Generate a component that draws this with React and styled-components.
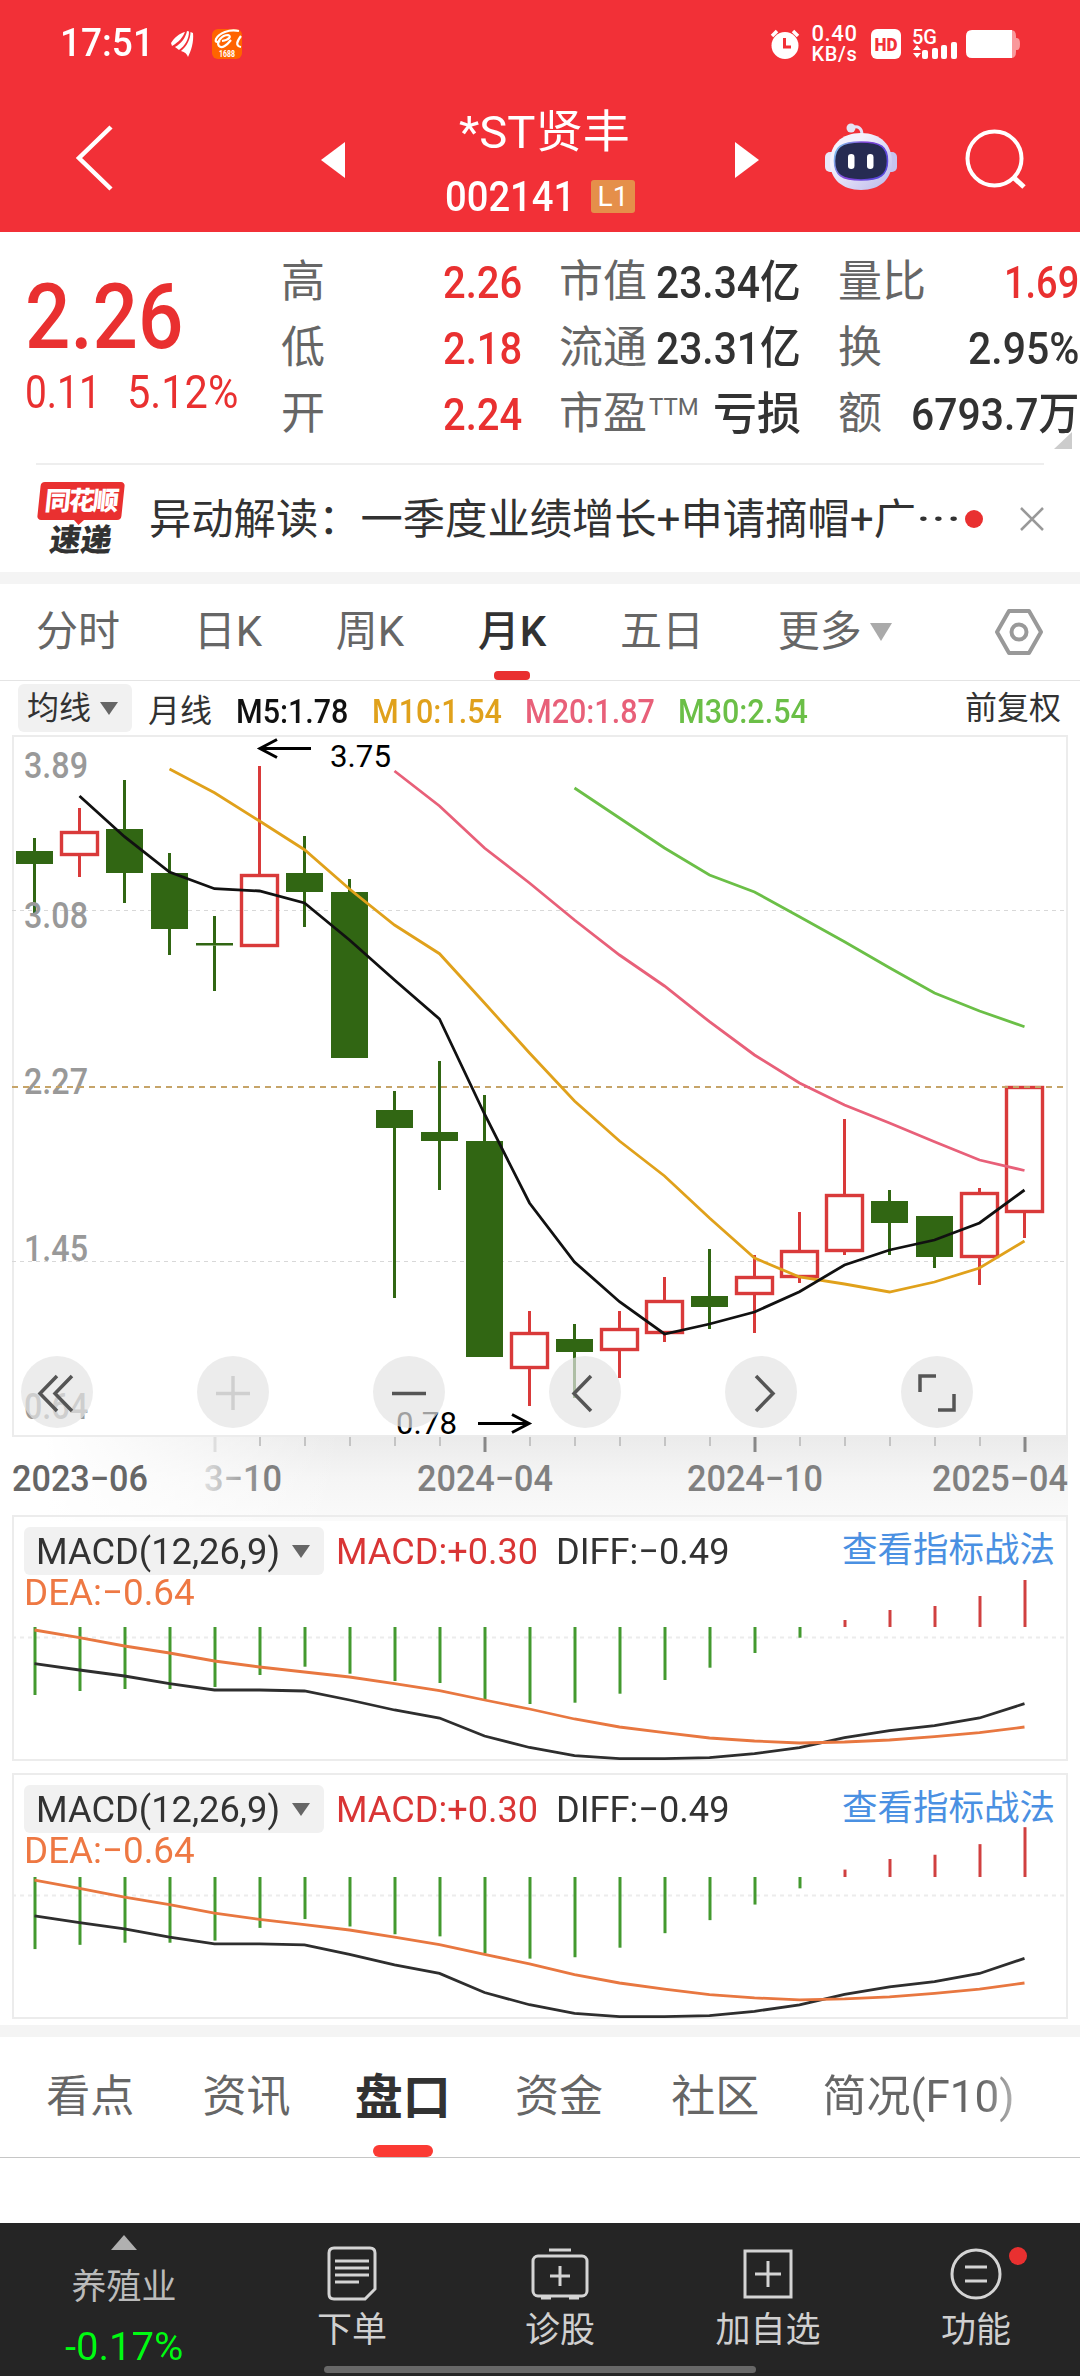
import React, { useLayoutEffect, useRef, useState } from 'react'
import styled, { createGlobalStyle } from 'styled-components'

const Colors = {
    header: '#f23037',
    red: '#e93030',
    text: '#323232',
    gray: '#666',
    band: '#f4f4f4',
    frame: '#ececec',
    candleRed: '#d93a3a',
    candleGreen: '#316613',
    black: '#111',
    m10: '#e0a11b',
    m20: '#e86079',
    m30: '#6bbf47',
    dea: '#ee7843',
    link: '#4a90e2',
}

const GlobalStyle = createGlobalStyle`
    * { box-sizing: border-box; }
    body {
        margin: 0;
        background: #fff;
        color: ${Colors.text};
        font-family: Roboto, "Noto Sans CJK SC", sans-serif;
        line-height: 1;
    }
    svg { display: block; overflow: visible; }
`

const Screen = styled.div`
    width: 1080px;
    height: 2376px;
    overflow: hidden;
    display: flex;
    flex-direction: column;
`

const FitBox = styled.span`
    display: inline-block;
    width: ${p => p.$w}px;
    white-space: nowrap;
    flex: none;
`

const FitText = styled.span`
    display: inline-block;
    transform-origin: left center;
`

function Fit({ w, children }) {
    const ref = useRef(null)
    const [scale, setScale] = useState(1)
    useLayoutEffect(() => {
        setScale(w / ref.current.offsetWidth)
    }, [w, children])
    return (
        <FitBox $w={w}>
            <FitText ref={ref} style={{ transform: `scaleX(${scale})` }}>{children}</FitText>
        </FitBox>
    )
}

/* ---------- header ---------- */

const Header = styled.header`
    height: 232px;
    flex: none;
    background: ${Colors.header};
    color: #fff;
`

const StatusBar = styled.div`
    height: 88px;
    padding: 0 60px 0 60px;
    display: flex;
    align-items: center;
`

const Clock = styled.div`
    font-size: 39px;
    font-weight: 500;
    line-height: 40px;
    margin: -3px 17px 0 0;
`

const StatusIcons = styled.div`
    margin-left: auto;
    display: flex;
    align-items: center;
`

const Speed = styled.div`
    width: 51px;
    margin: -2px 11px 0 9px;
    font-size: 20px;
    font-weight: 500;
    line-height: 18px;
    text-align: center;
    letter-spacing: 0.6px;
    & b {
        display: block;
        font-size: 22px;
        line-height: 22px;
        font-weight: 500;
    }
`

const TitleBar = styled.div`
    height: 144px;
    display: flex;
    align-items: flex-start;
`

const BackIcon = styled.svg`
    margin: 36px 0 0 76px;
`

const Arrow = styled.svg`
    margin-top: 53px;
    flex: none;
`

const Title = styled.div`
    width: 390px;
    text-align: center;
    & h1 {
        margin: 14px 0 0;
        font-size: 45px;
        line-height: 62px;
        font-weight: 400;
    }
    & p {
        margin: 0;
        display: flex;
        justify-content: center;
        align-items: center;
        font-size: 42px;
        font-weight: 500;
        line-height: 66px;
        height: 66px;
    }
`

const Level = styled.span`
    width: 44px;
    height: 33px;
    margin: 0 0 2px 16px;
    border-radius: 3px;
    background: #e58f4a;
    font-size: 28px;
    font-weight: 400;
    line-height: 33px;
`

/* ---------- quote ---------- */

const Quote = styled.section`
    height: 231px;
    flex: none;
    display: flex;
    position: relative;
    padding-top: 17px;
`

const Price = styled.div`
    width: 281px;
    padding-left: 25px;
    color: ${Colors.red};
    & strong {
        display: block;
        margin-top: 23px;
        font-size: 90px;
        line-height: 92px;
        font-weight: 500;
    }
    & p {
        margin: 5px 0 0;
        display: flex;
        gap: 26px;
        font-size: 46px;
        line-height: 46px;
    }
`

const Facts = styled.div`
    display: grid;
    grid-template-columns: 241px 242px 241px;
    grid-auto-rows: 66px;
    column-gap: 37px;
`

const Fact = styled.div`
    display: flex;
    justify-content: space-between;
    align-items: center;
    font-size: 44px;
    color: ${Colors.gray};
    & sup {
        align-self: flex-start;
        margin: 12px auto 0 2px;
        font-size: 24px;
        line-height: 28px;
    }
    & b {
        font-size: 45px;
        font-weight: 500;
        color: ${p => (p.$up ? Colors.red : Colors.text)};
    }
`

const Corner = styled.svg`
    position: absolute;
    right: 8px;
    bottom: 14px;
`

const News = styled.section`
    height: 109px;
    flex: none;
    margin: 0 36px;
    border-top: 2px solid #eee;
    display: flex;
    align-items: center;
    & p {
        margin: 4px 0 0 23px;
        font-size: 42.3px;
    }
`

const Badge = styled.div`
    width: 90px;
    height: 73px;
    display: flex;
    flex-direction: column;
    align-items: center;
    font-weight: 900;
`

const BadgeTop = styled.div`
    position: relative;
    width: 84px;
    height: 38px;
    border-radius: 4px;
    background: ${Colors.red};
    color: #fff;
    font-size: 26px;
    line-height: 38px;
    letter-spacing: -2px;
    text-align: center;
    transform: skewX(-6deg);
    &::after {
        content: '';
        position: absolute;
        left: 36px;
        top: 37px;
        border: 6px solid transparent;
        border-top-color: ${Colors.red};
    }
`

const BadgeBottom = styled.div`
    margin-top: 6px;
    font-size: 31px;
    line-height: 30px;
    transform: skewX(-8deg);
`

const Dot = styled.i`
    width: 18px;
    height: 18px;
    border-radius: 50%;
    background: ${Colors.red};
`

const Band = styled.div`
    height: 12px;
    flex: none;
    background: ${Colors.band};
`

/* ---------- period tabs ---------- */

const Tabs = styled.nav`
    height: 97px;
    flex: none;
    padding-left: 36px;
    display: flex;
    gap: 73.7px;
    border-bottom: 1px solid #e4e4e4;
    font-size: 42px;
    line-height: 98px;
    color: ${Colors.gray};
`

const Tab = styled.span`
    position: relative;
    display: flex;
    align-items: center;
    color: ${p => (p.$active ? Colors.text : 'inherit')};
    font-weight: ${p => (p.$active ? 500 : 400)};
    &::after {
        content: '';
        display: ${p => (p.$active ? 'block' : 'none')};
        position: absolute;
        left: 50%;
        bottom: 0;
        width: 36px;
        height: 9px;
        margin-left: -18px;
        border-radius: 4px;
        background: ${Colors.red};
    }
`

const Down = styled.i`
    width: 0;
    border: solid transparent;
    border-width: ${p => p.$h}px ${p => p.$w / 2}px 0;
    border-top-color: ${p => p.$color};
`

const Settings = styled.svg`
    margin: 24px 0 0 29px;
`

const MaBar = styled.div`
    height: 54px;
    flex: none;
    padding: 0 19px 0 18px;
    display: flex;
    align-items: center;
    font-size: 32px;
    font-weight: 500;
    & > i {
        margin-left: auto;
        font-style: normal;
        font-weight: 400;
    }
`

const Chip = styled.span`
    width: ${p => p.$w}px;
    height: 48px;
    padding: 0 14px 0 9px;
    display: flex;
    align-items: center;
    justify-content: space-between;
    background: #f1f1f1;
    border-radius: 6px;
    font-weight: 400;
`

const MaLabel = styled.span`
    margin-left: ${p => p.$ml}px;
    padding-top: 6px;
    color: ${p => p.$color || Colors.text};
    font-size: ${p => p.$size || 34}px;
    font-weight: ${p => (p.$size ? 400 : 500)};
`

/* ---------- charts ---------- */

const ChartWrap = styled.section`
    position: relative;
    height: 780px;
    flex: none;
`

const Tools = styled.div`
    position: absolute;
    left: 21px;
    top: 621px;
    display: flex;
    gap: 104px;
`

const Tool = styled.button`
    width: 72px;
    height: 72px;
    padding: 0;
    border: 0;
    border-radius: 50%;
    background: rgba(228, 228, 228, 0.7);
`

const MacdPanel = styled.section`
    position: relative;
    height: 246px;
    flex: none;
    margin: 0 12px ${p => p.$mb}px;
    border: 2px solid ${Colors.frame};
    display: grid;
    & > * {
        grid-area: 1 / 1;
    }
`

const MacdInfo = styled.div`
    padding: 10px 11px 0 10px;
    font-size: 37px;
    & > div {
        display: flex;
        align-items: center;
        height: 48px;
    }
    & > p {
        margin: 0;
        line-height: 36px;
        color: ${Colors.dea};
    }
    & a {
        margin-left: auto;
        color: ${Colors.link};
        font-size: 35.5px;
    }
`

const MacdValue = styled.span`
    margin-left: ${p => p.$ml}px;
    color: ${p => p.$color};
`

/* ---------- bottom ---------- */

const InfoTabs = styled.nav`
    height: 121px;
    flex: none;
    padding-left: 12px;
    display: flex;
    border-bottom: 1px solid #c6c6c6;
    font-size: 44px;
    line-height: 121px;
    color: ${Colors.gray};
`

const InfoTab = styled.span`
    position: relative;
    width: 156.3px;
    text-align: center;
    color: ${p => (p.$active ? Colors.text : 'inherit')};
    font-size: ${p => (p.$active ? 48 : 44)}px;
    font-weight: ${p => (p.$active ? 700 : 400)};
    &::after {
        content: '';
        display: ${p => (p.$active ? 'block' : 'none')};
        position: absolute;
        left: 48px;
        bottom: 0;
        width: 60px;
        height: 12px;
        border-radius: 6px;
        background: #fb3a33;
    }
`

const LastTab = styled.span`
    padding-left: 29px;
    background: linear-gradient(90deg, #666 85%, #b5b5b5);
    background-clip: text;
    color: transparent;
`

const BottomBar = styled.footer`
    position: relative;
    margin-top: auto;
    height: 153px;
    flex: none;
    display: grid;
    grid-template-columns: 248px 208px 208px 208px 208px;
    background: #252525;
    color: #d0d0d0;
    font-size: 35px;
`

const Industry = styled.div`
    display: flex;
    flex-direction: column;
    align-items: center;
    padding-top: 12px;
    line-height: 38px;
    color: #bbb;
    & > span {
        margin-top: 18px;
    }
    & > em {
        margin-top: 21px;
        font-style: normal;
        font-size: 39px;
        color: #00fa12;
    }
`

const NavItem = styled.div`
    position: relative;
    display: flex;
    flex-direction: column;
    align-items: center;
    padding-top: 22px;
    line-height: 38px;
    & svg {
        margin-bottom: 11px;
    }
    & ${Dot} {
        position: absolute;
        left: 137px;
        top: 24px;
    }
`

const HomeBar = styled.div`
    position: absolute;
    left: 324px;
    bottom: 3px;
    width: 432px;
    height: 7px;
    border-radius: 4px;
    background: #686868;
`

/* candle: [up, high, bodyTop, bodyBottom, low] in chart pixels */
const candles = [
    [0, 838, 851, 864, 913],
    [1, 808, 831, 856, 877],
    [0, 780, 829, 873, 903],
    [0, 853, 873, 929, 955],
    [0, 916, 943, 945.5, 991],
    [1, 766, 874, 947, 947],
    [0, 836, 873, 892, 927],
    [0, 879, 892, 1058, 1058],
    [0, 1091, 1110, 1128, 1298],
    [0, 1061, 1132, 1141, 1190],
    [0, 1095, 1141, 1357, 1357],
    [1, 1311, 1332, 1369, 1406],
    [0, 1324, 1339, 1352, 1398],
    [1, 1311, 1328, 1351, 1378],
    [1, 1277, 1300, 1334, 1342],
    [0, 1249, 1296, 1307, 1329],
    [1, 1255, 1276, 1295, 1333],
    [1, 1212, 1250, 1278, 1283],
    [1, 1119, 1194, 1252, 1255],
    [0, 1190, 1201, 1223, 1255],
    [0, 1216, 1216, 1257, 1268],
    [1, 1188, 1192, 1258, 1285],
    [1, 1086, 1086, 1213, 1238],
]

const averages = [
    { from: 3, color: Colors.m10, ys: [769, 792.7, 821, 849.7, 889, 925, 953.7, 1003, 1053, 1101, 1141, 1176, 1218, 1258, 1277, 1284, 1292, 1282, 1268, 1241] },
    { from: 8, color: Colors.m20, ys: [771, 806, 848, 883, 920, 955, 986, 1021.7, 1055, 1083, 1105, 1123, 1141.7, 1160, 1170.5] },
    { from: 12, color: Colors.m30, ys: [788, 818, 848, 875, 892, 916.7, 941.7, 967.7, 993, 1011, 1026.7] },
    { from: 1, color: Colors.black, ys: [796, 836.7, 872, 888.7, 891, 903, 940, 980, 1019, 1114, 1203, 1262, 1301.7, 1334, 1324, 1312, 1291.7, 1265, 1250, 1240, 1223, 1190] },
]

/* offsets from the zero line of the MACD chart */
const bars = [68, 64, 62, 62, 60, 48, 39.7, 46.7, 54, 56, 72, 77, 75.7, 66.7, 53, 40.7, 26, 10.7, -7, -17, -21, -31, -47]
const diff = [36.7, 43, 49, 56.7, 63, 63, 64, 73, 83, 91, 109, 120.5, 128.7, 131.7, 131.7, 130.7, 126.7, 120.7, 110.7, 103.7, 98.7, 91, 76.7]
const dea = [3, 10.7, 19, 26, 34, 40, 45, 50, 56.7, 63.7, 73, 82, 92, 100, 105.7, 111, 114, 116, 115, 113, 109.7, 105.7, 100]

const xAt = i => 34.5 + i * 45
const toPoints = (ys, from = 0) => ys.map((y, i) => `${xAt(i + from)},${y}`).join(' ')

function Candle({ i, data: [up, high, top, bottom, low] }) {
    const x = xAt(i)
    const color = up ? Colors.candleRed : Colors.candleGreen
    return (
        <g stroke={color} strokeWidth="3">
            {high < top && <line x1={x} x2={x} y1={high} y2={top} />}
            {low > bottom && <line x1={x} x2={x} y1={bottom} y2={low} />}
            {up
                ? <rect x={x - 18} y={top + 1.5} width="36" height={bottom - top - 3} fill="none" strokeWidth="3.4" />
                : <rect x={x - 18.5} y={top} width="37" height={bottom - top} fill={color} stroke="none" />}
        </g>
    )
}

function KLine() {
    const labels = [['3.89', 778], ['3.08', 928], ['2.27', 1094], ['1.45', 1261], ['0.64', 1419]]
    const dates = [['2023−06', 12], ['2024−04', 417], ['2024−10', 687], ['2025−04', 932]]
    return (
        <svg width="1080" height="780" viewBox="0 735 1080 780">
            <defs>
                <linearGradient id="shade" x1="0" y1="0" x2="0" y2="1">
                    <stop offset="0" stopColor="#ebebeb" />
                    <stop offset="0.5" stopColor="#f5f5f5" />
                    <stop offset="1" stopColor="#fafafa" />
                </linearGradient>
                <linearGradient id="cover" x1="0" y1="0" x2="1" y2="0">
                    <stop offset="0.1" stopColor="#fff" />
                    <stop offset="1" stopColor="#fff" stopOpacity="0" />
                </linearGradient>
                <linearGradient id="fade" gradientUnits="userSpaceOnUse" x1="195" y1="0" x2="265" y2="0">
                    <stop offset="0" stopColor="#808080" stopOpacity="0.1" />
                    <stop offset="1" stopColor="#808080" />
                </linearGradient>
            </defs>
            <rect x="12" y="1437" width="1056" height="84" fill="url(#shade)" />
            <rect x="12" y="1437" width="330" height="84" fill="url(#cover)" />
            <rect x="13" y="736" width="1054" height="700" fill="none" stroke={Colors.frame} strokeWidth="2" />
            <g strokeWidth="1" stroke="#d8d8d8" strokeDasharray="4 4">
                <line x1="12" x2="1066" y1="910.5" y2="910.5" />
                <line x1="12" x2="1066" y1="1261.5" y2="1261.5" />
            </g>
            {candles.map((c, i) => <Candle key={i} i={i} data={c} />)}
            <g fill="#999" fontSize="36" fontWeight="500">
                {labels.map(([t, y]) => (
                    <text key={t} x="24" y={y} textLength="64" lengthAdjust="spacingAndGlyphs">{t}</text>
                ))}
            </g>
            <line x1="12" x2="1066" y1="1087" y2="1087" stroke="#c6a468" strokeWidth="2" strokeDasharray="6 5" />
            {averages.map(a => (
                <polyline key={a.color} points={toPoints(a.ys, a.from)} fill="none" stroke={a.color} strokeWidth="2.8" />
            ))}
            <g fill="none" stroke="#000" strokeWidth="3">
                <path d="M311 748.500H260M277 739.500L260 748.500L277 757.500" />
                <path d="M478 1423.500H529M512 1414.500L529 1423.500L512 1432.500" />
            </g>
            <g fill="#000" fontSize="32">
                <text x="330" y="767" textLength="61" lengthAdjust="spacingAndGlyphs">3.75</text>
                <text x="396" y="1434" textLength="61" lengthAdjust="spacingAndGlyphs">0.78</text>
            </g>
            {candles.map((c, i) => {
                if (i < 4) return null
                const major = (i - 4) % 6 === 0
                return (
                    <line
                        key={i}
                        x1={xAt(i) + 0.5}
                        x2={xAt(i) + 0.5}
                        y1="1437"
                        y2={major ? 1452 : 1446}
                        stroke={major ? (i === 4 ? '#dedede' : '#888') : '#c4c4c4'}
                        strokeWidth={major ? 3 : 2}
                    />
                )
            })}
            <g fontSize="36" fontWeight="500">
                {dates.map(([t, x], i) => (
                    <text key={t} x={x} y="1490.500" fill={i ? '#808080' : '#666'} textLength="136" lengthAdjust="spacingAndGlyphs">{t}</text>
                ))}
                <text x="204" y="1490.500" fill="url(#fade)" textLength="78" lengthAdjust="spacingAndGlyphs">3−10</text>
            </g>
        </svg>
    )
}

const toolPaths = [
    'M36 20L19 37.500L36 55M51 20L34 37.500L51 55',
    'M36 20V54M19 37.500H53',
    'M19 37.500H53',
    'M42 20L25 37.500L42 55',
    'M31 20L48 37.500L31 55',
    'M19 36V20H35M53 38V54H37',
]

function Macd({ top, zero, scale, mb }) {
    const y = v => zero + v * scale
    return (
        <MacdPanel $mb={mb}>
            <svg width="1052" height="242" viewBox={`14 ${top + 2} 1052 242`}>
                <line x1="12" x2="1066" y1={top + 122.5} y2={top + 122.5} stroke={Colors.frame} strokeWidth="2" strokeDasharray="4 4" />
                {bars.map((b, i) => (
                    <line key={i} x1={xAt(i) + 0.5} x2={xAt(i) + 0.5} y1={zero} y2={y(b)} stroke={b > 0 ? '#43992f' : '#d04040'} strokeWidth="3" />
                ))}
                <polyline points={toPoints(diff.map(y))} fill="none" stroke="#2e2e2e" strokeWidth="2.8" />
                <polyline points={toPoints(dea.map(y))} fill="none" stroke="#e87740" strokeWidth="2.8" />
            </svg>
            <MacdInfo>
                <div>
                    <Chip $w={300}>
                        <MacdValue $ml={3}><Fit w={244}>MACD(12,26,9)</Fit></MacdValue>
                        <Down $w={18} $h={13} $color={Colors.gray} />
                    </Chip>
                    <MacdValue $ml={12} $color="#d93535"><Fit w={202}>MACD:+0.30</Fit></MacdValue>
                    <MacdValue $ml={18} $color={Colors.text}><Fit w={174}>DIFF:−0.49</Fit></MacdValue>
                    <a>查看指标战法</a>
                </div>
                <p><Fit w={171}>DEA:−0.64</Fit></p>
            </MacdInfo>
        </MacdPanel>
    )
}

function StatusGlyphs() {
    return (
        <>
            <svg width="24" height="26" viewBox="0 0 24 26" fill="#fff">
                <path d="M0 12C3 7 9 2 14 1C12 6 8 11 1 15ZM4 16C10 13 15 6 16 0L18 0.500C18 8 14 15 8 19ZM10 20C16 15 19.500 8 19.500 1L22 2C23 11 20 20 17 26C16 23 14 21 10 20Z" />
            </svg>
            <svg width="30" height="30" viewBox="0 0 30 30" style={{ marginLeft: 17 }}>
                <rect width="30" height="30" rx="6" fill="#ff6400" />
                <path d="M27 2C17 0 7 4 4 10C3 13 5 14 8 12M10 12C17 11 20 7 16 6C10 6 4 13 7 17C10 20 15 16 19 11M29 7C25 12 23 17 29 18" fill="none" stroke="#fff" strokeWidth="2.200" />
                <text x="7" y="28" fill="#fff" fontSize="9" fontWeight="700" textLength="16" lengthAdjust="spacingAndGlyphs">1688</text>
            </svg>
        </>
    )
}

function Robot() {
    return (
        <svg width="74" height="68" viewBox="0 0 74 68">
            <defs>
                <linearGradient id="shell" x1="0" y1="0" x2="1" y2="1">
                    <stop offset="0.3" stopColor="#f4f2fd" />
                    <stop offset="1" stopColor="#b9b6ea" />
                </linearGradient>
                <linearGradient id="rim" x1="0" y1="0" x2="1" y2="0.4">
                    <stop offset="0" stopColor="#7fd8f4" />
                    <stop offset="0.5" stopColor="#8243d8" />
                    <stop offset="1" stopColor="#5b49dd" />
                </linearGradient>
            </defs>
            <path d="M27 5C34 2 38 5 38 12" fill="none" stroke="#e4e2f8" strokeWidth="3" />
            <circle cx="27" cy="5" r="4.500" fill="#e4e4f4" />
            <rect x="1" y="29" width="12" height="20" rx="5" fill="#e9e7f8" />
            <rect x="61" y="29" width="12" height="20" rx="5" fill="#c6c3ee" />
            <path d="M37 10C57 10 68 22 68 39C68 56 56 67 37 67C18 67 6 56 6 39C6 22 17 10 37 10Z" fill="url(#shell)" />
            <path d="M37 19C57 19 63.500 24 63.500 38C63.500 52 56 57 37 57C18 57 10.500 52 10.500 38C10.500 24 17 19 37 19Z" fill="#262b52" stroke="url(#rim)" strokeWidth="1.600" />
            <rect x="24" y="31" width="6.500" height="15" rx="3.200" fill="#fff" />
            <rect x="43" y="31" width="6.500" height="15" rx="3.200" fill="#fff" />
        </svg>
    )
}

const facts = [
    ['高', '2.26', 79, true], ['市值', '23.34亿', 145], ['量比', '1.69', 75, true],
    ['低', '2.18', 79, true], ['流通', '23.31亿', 145], ['换', '2.95%', 111],
    ['开', '2.24', 79, true], ['市盈', '亏损', 88, false, 'TTM'], ['额', '6793.7万', 168],
]

function App() {
    return (
        <Screen>
            <GlobalStyle />
            <Header>
                <StatusBar>
                    <Clock><Fit w={94}>17:51</Fit></Clock>
                    <StatusGlyphs />
                    <StatusIcons>
                        <svg width="30" height="30" viewBox="0 0 30 30">
                            <path d="M2 7L7 2M28 7L23 2" stroke="#fff" strokeWidth="3.500" />
                            <circle cx="15" cy="16.500" r="13.500" fill="#fff" />
                            <path d="M14.500 9V18H21" fill="none" stroke={Colors.header} strokeWidth="3" />
                        </svg>
                        <Speed><b>0.40</b>KB/s</Speed>
                        <svg width="30" height="30" viewBox="0 0 30 30">
                            <rect width="30" height="30" rx="6" fill="#fff" />
                            <text x="3.500" y="21.500" fill={Colors.header} fontSize="18" fontWeight="900" textLength="23" lengthAdjust="spacingAndGlyphs">HD</text>
                        </svg>
                        <svg width="45" height="32" viewBox="0 0 45 32" fill="#fff" style={{ marginLeft: 11 }}>
                            <text x="0" y="15.500" fontSize="20" fontWeight="500" textLength="25" lengthAdjust="spacingAndGlyphs">5G</text>
                            <path d="M1 22L5 17L9 22ZM1 25H9L5 30Z" />
                            <rect x="10" y="22" width="6" height="9" rx="2" />
                            <rect x="20" y="20" width="6" height="11" rx="2" />
                            <rect x="29" y="17" width="6" height="14" rx="2" />
                            <rect x="39" y="14" width="6" height="17" rx="2" />
                        </svg>
                        <svg width="54" height="28" viewBox="0 0 54 28" style={{ marginLeft: 9 }}>
                            <path d="M42 0H45Q50 0 50 6V8H51Q54 8 54 14Q54 20 51 20H50V22Q50 28 45 28H42Z" fill="#fff" opacity="0.5" />
                            <path d="M6 0H46V28H6Q0 28 0 22V6Q0 0 6 0Z" fill="#fff" />
                        </svg>
                    </StatusIcons>
                </StatusBar>
                <TitleBar>
                    <BackIcon width="38" height="68" viewBox="0 0 38 68">
                        <path d="M35 3L3 34L35 65" fill="none" stroke="#fff" strokeWidth="4.500" />
                    </BackIcon>
                    <Arrow width="24" height="38" viewBox="0 0 24 38" style={{ marginLeft: 207 }}>
                        <path d="M24 1V37L0 19Z" fill="#fff" />
                    </Arrow>
                    <Title>
                        <h1><Fit w={171}>*ST贤丰</Fit></h1>
                        <p><Fit w={130}>002141</Fit><Level>L1</Level></p>
                    </Title>
                    <Arrow width="24" height="38" viewBox="0 0 24 38">
                        <path d="M0 1V37L24 19Z" fill="#fff" />
                    </Arrow>
                    <svg width="206" height="100" viewBox="759 88 206 100">
                        <g transform="translate(824 123)"><Robot /></g>
                    </svg>
                    <svg width="62" height="62" viewBox="0 0 62 62" style={{ marginTop: 41 }}>
                        <circle cx="29.500" cy="29.500" r="27" fill="none" stroke="#fff" strokeWidth="4" />
                        <path d="M48 48L59 58" stroke="#fff" strokeWidth="5" />
                    </svg>
                </TitleBar>
            </Header>

            <Quote>
                <Price>
                    <strong><Fit w={158}>2.26</Fit></strong>
                    <p><Fit w={76}>0.11</Fit><Fit w={111}>5.12%</Fit></p>
                </Price>
                <Facts>
                    {facts.map(([label, value, w, up, sup]) => (
                        <Fact key={label} $up={up}>
                            <span>{label}</span>
                            {sup && <sup>{sup}</sup>}
                            <b><Fit w={w}>{value}</Fit></b>
                        </Fact>
                    ))}
                </Facts>
                <Corner width="18" height="17"><path d="M18 0V17H0Z" fill="#ccc" /></Corner>
            </Quote>

            <News>
                <Badge>
                    <BadgeTop>同花顺</BadgeTop>
                    <BadgeBottom>速递</BadgeBottom>
                </Badge>
                <p><Fit w={767}>异动解读：一季度业绩增长+申请摘帽+广</Fit><Fit w={45}>···</Fit></p>
                <Dot style={{ marginLeft: 4 }} />
                <svg width="24" height="24" viewBox="0 0 24 24" style={{ marginLeft: 37 }}>
                    <path d="M1 1L23 23M23 1L1 23" stroke="#999" strokeWidth="2.500" />
                </svg>
            </News>
            <Band />

            <Tabs>
                <Tab>分时</Tab>
                <Tab>日K</Tab>
                <Tab>周K</Tab>
                <Tab $active>月K</Tab>
                <Tab>五日</Tab>
                <Tab>更多<Down $w={22} $h={18} $color="#aaa" style={{ marginLeft: 8 }} /></Tab>
                <Settings width="50" height="48" viewBox="0 0 50 48" fill="none" stroke="#999" strokeWidth="4">
                    <path d="M15 3H35L47 24L35 45H15L3 24Z" strokeLinejoin="round" />
                    <circle cx="25" cy="24" r="7.500" />
                </Settings>
            </Tabs>
            <MaBar>
                <Chip $w={114}>均线<Down $w={18} $h={13} $color={Colors.gray} /></Chip>
                <MaLabel $ml={16} $size={32}>月线</MaLabel>
                <MaLabel $ml={24} $color={Colors.black}><Fit w={112}>M5:1.78</Fit></MaLabel>
                <MaLabel $ml={24} $color={Colors.m10}><Fit w={130}>M10:1.54</Fit></MaLabel>
                <MaLabel $ml={23} $color={Colors.m20}><Fit w={130}>M20:1.87</Fit></MaLabel>
                <MaLabel $ml={23} $color={Colors.m30}><Fit w={130}>M30:2.54</Fit></MaLabel>
                <i>前复权</i>
            </MaBar>

            <ChartWrap>
                <KLine />
                <Tools>
                    {toolPaths.map((d, i) => (
                        <Tool key={d}>
                            <svg width="72" height="72" viewBox="0 0 72 72">
                                <path d={d} fill="none" stroke={i === 1 ? '#cfcfcf' : '#555'} strokeWidth="3.500" />
                            </svg>
                        </Tool>
                    ))}
                </Tools>
            </ChartWrap>

            <Macd top={1515} zero={1627} scale={1} mb={12} />
            <Macd top={1773} zero={1877} scale={1.06} mb={6} />
            <Band />

            <InfoTabs>
                <InfoTab>看点</InfoTab>
                <InfoTab>资讯</InfoTab>
                <InfoTab $active>盘口</InfoTab>
                <InfoTab>资金</InfoTab>
                <InfoTab>社区</InfoTab>
                <LastTab>简况(F10)</LastTab>
            </InfoTabs>

            <BottomBar>
                <Industry>
                    <svg width="26" height="16"><path d="M0 15L13 0L26 15Z" fill="#b0b0b0" /></svg>
                    <span>养殖业</span>
                    <em><Fit w={118}>-0.17%</Fit></em>
                </Industry>
                <NavItem>
                    <svg width="50" height="56" viewBox="0 0 50 56" fill="none" stroke="#d4d4d4" strokeWidth="3">
                        <path d="M7 3H43Q48 3 48 8V44L38 54H7Q2 54 2 49V8Q2 3 7 3Z" />
                        <path d="M8 16H42M8 23H42M8 30H42M8 37H32" />
                    </svg>
                    下单
                </NavItem>
                <NavItem>
                    <svg width="58" height="56" viewBox="0 0 58 56" fill="none" stroke="#d4d4d4" strokeWidth="3">
                        <rect x="2" y="11" width="54" height="40" rx="5" />
                        <path d="M18 5H40M10 53H20M38 53H48M29 21V41M19 31H39" />
                    </svg>
                    诊股
                </NavItem>
                <NavItem>
                    <svg width="50" height="56" viewBox="0 0 50 56" fill="none" stroke="#d4d4d4" strokeWidth="3">
                        <rect x="2" y="6" width="46" height="46" />
                        <path d="M25 16V42M12 29H38" />
                    </svg>
                    加自选
                </NavItem>
                <NavItem>
                    <svg width="52" height="56" viewBox="0 0 52 56" fill="none" stroke="#d4d4d4" strokeWidth="3">
                        <circle cx="26" cy="29" r="24" />
                        <path d="M15 22H37M15 36H37" />
                    </svg>
                    功能
                    <Dot />
                </NavItem>
                <HomeBar />
            </BottomBar>
        </Screen>
    )
}

export default App
